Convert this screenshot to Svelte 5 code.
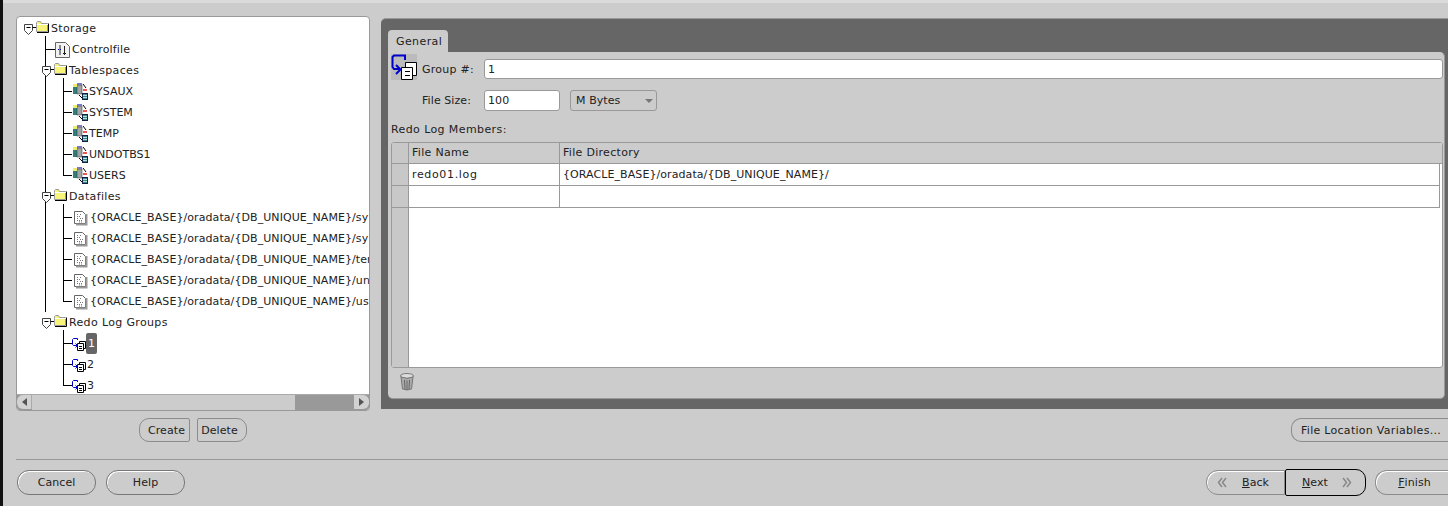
<script>
  const tablespaces = ['SYSAUX', 'SYSTEM', 'TEMP', 'UNDOTBS1', 'USERS'];
  const datafiles = ['sy', 'sy', 'ter', 'un', 'us'];
  const groups = ['1', '2', '3'];
</script>

{#snippet toggle()}
  <svg class="toggle" width="13" height="14" viewBox="0 0 13 14"><path d="M1.500 2.500h8v6l-4 4-4-4z" fill="#fff" stroke="#444"/><path d="M3.500 5.500h4" stroke="#000"/><path d="M9.500 5.500H13" stroke="#000"/></svg>
{/snippet}

{#snippet folder()}
  <svg class="folder" width="13" height="12" viewBox="0 0 13 12"><path d="M.5 3.500V1.500l1-1h3l1 2h6v8H.5z" fill="#f8f47a" stroke="#999"/><path d="M1 3.500h11" stroke="#fff"/><path d="M12.500 2.500v9H1" stroke="#000" fill="none"/></svg>
{/snippet}

<div class="page">
  <div class="top">
    <div class="left">
      <div class="tree-box">
        <div class="tree">
          <div class="row">
            {@render toggle()}
            {@render folder()}
            <span class="label">Storage</span>
          </div>
          <div class="kids root-kids">
            <div class="row leaf">
              <span class="hook"></span>
              <svg class="ctl" width="15" height="16" viewBox="0 0 15 16"><path d="M.5 .5h10l4 4v11H.5z" fill="#f2f2f2" stroke="#666"/><path d="M5 3v10M9.500 4v9" stroke="#222"/><path d="M3 7.500h4M8 11.500h4" stroke="#00a" stroke-dasharray="1 1"/></svg>
              <span class="ctl-text">Controlfile</span>
            </div>
            <div class="row">
              {@render toggle()}
              {@render folder()}
              <span class="label">Tablespaces</span>
            </div>
            <div class="kids">
              {#each tablespaces as name}
                <div class="row leaf">
                  <span class="hook short"></span>
                  <svg width="17" height="17" viewBox="0 0 17 17"><rect x="1" y="3" width="4" height="8" fill="#2f7f7f"/><rect x="5" y="2" width="5" height="9" fill="#a4a4a4" stroke="#333" stroke-width=".5"/><path d="M1 1h4v3H1z" fill="#ee6"/><path d="M5 0h5v2H5z" fill="#77c"/><path d="M11 6h4v2h-4z" fill="#e55"/><rect x="10.500" y="10.500" width="5" height="6" fill="#3a8a8a" stroke="#124"/><path d="M11 12.500h4M11 14.500h4" stroke="#bdd"/><path d="M7 12l3 3M11 1l3 4" stroke="#000" fill="none"/></svg>
                  <span class="sub-text">{name}</span>
                </div>
              {/each}
            </div>
            <div class="row">
              {@render toggle()}
              {@render folder()}
              <span class="label">Datafiles</span>
            </div>
            <div class="kids">
              {#each datafiles as tail}
                <div class="row leaf">
                  <span class="hook short"></span>
                  <svg class="doc" width="15" height="16" viewBox="0 0 15 16"><path d="M1.500 1.500h8l3 3v9h-11z" fill="#fff" stroke="#666"/><path d="M13.500 4v10.500H3" stroke="#999" stroke-width="2" fill="none"/><path d="M4 4.500h2M7 4.500h2M4 6.500h4M4 8.500h2M7 8.500h3M4 10.500h5M6 12h3" stroke="#777" stroke-dasharray="1 1"/></svg>
                  <span class="clip">{'{ORACLE_BASE}/oradata/{DB_UNIQUE_NAME}/' + tail}</span>
                </div>
              {/each}
            </div>
            <div class="row">
              {@render toggle()}
              {@render folder()}
              <span class="label">Redo Log Groups</span>
            </div>
            <div class="kids">
              {#each groups as g}
                <div class="row leaf">
                  <span class="hook short"></span>
                  <svg width="14" height="16" viewBox="0 0 14 16"><path d="M5.500 4V2.500h-4l-1 1v5l1 1H5" fill="none" stroke="#00c"/><path d="M3.500 7.500l2 2-2 2" fill="none" stroke="#00c"/><path d="M7.500 5.500h6v7h-6z" fill="#fff" stroke="#000"/><path d="M5.500 7.500h6v7h-6z" fill="#fff" stroke="#000"/><path d="M7 10.500h3M7 12.500h3" stroke="#000"/></svg>
                  <span class="num" class:selected={g === '1'}>{g}</span>
                </div>
              {/each}
            </div>
          </div>
        </div>
        <div class="hscroll">
          <button class="arrow start" aria-label="left"><span class="tri-l"></span></button>
          <div class="track"><div class="thumb"></div></div>
          <button class="arrow end" aria-label="right"><span class="tri-r"></span></button>
        </div>
      </div>
      <div class="tree-actions">
        <button class="btn pill-l">Create</button>
        <button class="btn pill-r">Delete</button>
      </div>
    </div>

    <div class="right">
      <div class="tab-panel">
        <div class="tab">General</div>
        <div class="tab-body">
          <div class="form-row first">
            <svg class="group-icon" width="26" height="26" viewBox="0 0 26 26"><rect width="26" height="26" fill="#bbb"/><path d="M14 6V1.500H3L1.500 3v10L3 15h5" fill="none" stroke="#00c" stroke-width="2"/><path d="M5 11l4.500 4.500L5 20" fill="none" stroke="#00c" stroke-width="2"/><path d="M14.500 8.500h11v13h-11z" fill="#fff" stroke="#000"/><path d="M10.500 13.500h11v12h-11z" fill="#fff" stroke="#000"/><path d="M14 17.500h5M14 21.500h5" stroke="#000"/></svg>
            <label class="lbl-group" for="group">Group #:</label>
            <input id="group" class="field wide" value="1" />
          </div>
          <div class="form-row second">
            <label class="lbl-size" for="size">File Size:</label>
            <input id="size" class="field small" value="100" />
            <div class="combo">M Bytes<span class="combo-tri"></span></div>
          </div>
          <div class="members">Redo Log Members:</div>
          <div class="table">
            <div class="gutter">
              <div class="g-head"></div>
              <div class="g-cell"></div>
              <div class="g-cell"></div>
            </div>
            <div class="grid-area">
              <div class="t-row head">
                <div class="c1">File Name</div>
                <div class="c2">File Directory</div>
              </div>
              <div class="t-row">
                <div class="c1 name">redo01.log</div>
                <div class="c2">{'{ORACLE_BASE}/oradata/{DB_UNIQUE_NAME}/'}</div>
              </div>
              <div class="t-row">
                <div class="c1"></div>
                <div class="c2"></div>
              </div>
            </div>
          </div>
          <svg class="trash" width="14" height="18" viewBox="0 0 14 18"><ellipse cx="7" cy="3" rx="6.500" ry="2.500" fill="#ddd" stroke="#777"/><path d="M1 4l1.500 12q4.500 2 9 0L13 4q-6 2.500-12 0z" fill="#aaa" stroke="#777"/><path d="M4.500 7l.5 9M7 7.500V17M9.500 7L9 16" stroke="#666"/></svg>
        </div>
      </div>
      <div class="loc-row">
        <button class="btn pill">File Location Variables...</button>
      </div>
    </div>
  </div>

  <div class="footer">
    <div class="foot-left">
      <button class="btn foot">Cancel</button>
      <button class="btn foot">Help</button>
    </div>
    <div class="foot-right">
      <div class="nav">
        <button class="btn back">
          <svg width="10" height="11" viewBox="0 0 10 11"><path d="M5 1L1.500 5.500 5 10M9 1L5.500 5.500 9 10" fill="none" stroke="#888" stroke-width="1.500"/></svg>
          <span><u>B</u>ack</span>
        </button>
        <button class="btn next">
          <span><u>N</u>ext</span>
          <svg width="10" height="11" viewBox="0 0 10 11"><path d="M1 1l3.500 4.500L1 10M5 1l3.500 4.500L5 10" fill="none" stroke="#888" stroke-width="1.500"/></svg>
        </button>
      </div>
      <button class="btn finish"><u>F</u>inish</button>
    </div>
  </div>
</div>

<style>
  :global(body) {
    margin: 0;
    background: #cccccc;
  }

  .page {
    box-sizing: border-box;
    width: 1448px;
    height: 506px;
    overflow: hidden;
    background: #cccccc;
    border-left: 3px solid #111;
    font-family: "DejaVu Sans", sans-serif;
    font-size: 11px;
    letter-spacing: 0.08px;
    color: #222;
    padding-top: 3px;
    background-image: linear-gradient(#dadada, #dadada);
    background-size: 100% 3px;
    background-repeat: no-repeat;
  }

  .top {
    box-sizing: border-box;
    height: 456px;
    display: flex;
    padding: 13px 0 0 13px;
    gap: 11px;
  }

  .left {
    width: 354px;
    flex: none;
  }

  .tree-box {
    box-sizing: border-box;
    height: 395px;
    border: 1px solid #999;
    border-radius: 4px;
    background: #fff;
    overflow: hidden;
    display: flex;
    flex-direction: column;
  }

  .tree {
    flex: 1;
    overflow: hidden;
    padding: 1px 0 0 6px;
  }

  .row {
    height: 21px;
    display: flex;
    align-items: center;
    white-space: nowrap;
    line-height: 21px;
    position: relative;
  }

  .toggle {
    flex: none;
  }

  .folder {
    flex: none;
    margin-top: -3px;
  }

  .label {
    margin-left: 2px;
    letter-spacing: 0.35px;
  }

  .kids {
    margin-left: 18px;
    position: relative;
  }

  .kids::before {
    content: "";
    position: absolute;
    left: 4px;
    top: -3px;
    bottom: 10px;
    width: 1px;
    background: #000;
  }

  .root-kids::before {
    bottom: 84px;
  }

  .leaf {
    padding-left: 4px;
  }

  .hook {
    display: inline-block;
    width: 10px;
    height: 1px;
    background: #000;
    flex: none;
  }

  .hook.short {
    width: 9px;
  }

  .ctl-text {
    margin-left: 2px;
    letter-spacing: 0.15px;
  }

  .sub-text {
    letter-spacing: 0;
  }

  .doc {
    margin-left: 1px;
    margin-right: 2px;
    flex: none;
  }

  .clip {
    flex: none;
  }

  .num {
    margin-left: 1px;
  }

  .selected {
    background: #666;
    color: #fff;
    border-radius: 2px;
    padding: 0 2px;
    margin-left: 0;
    height: 21px;
  }

  .hscroll {
    height: 15px;
    display: flex;
    background: #999;
    border-top: 1px solid #aaa;
    flex: none;
  }

  .arrow {
    width: 15px;
    height: 14px;
    padding: 0;
    border: none;
    background: #d2d2d2;
    display: flex;
    align-items: center;
    justify-content: center;
  }

  .arrow.start {
    border-radius: 6px 0 0 6px;
    border-right: 1px solid #aaa;
  }

  .arrow.end {
    border-radius: 0 6px 6px 0;
  }

  .tri-l {
    border: 4px solid transparent;
    border-left: 0;
    border-right: 5px solid #555;
  }

  .tri-r {
    border: 4px solid transparent;
    border-right: 0;
    border-left: 5px solid #555;
  }

  .track {
    flex: 1;
    background: #999;
  }

  .thumb {
    width: 263px;
    height: 100%;
    background: #ccc;
  }

  .tree-actions {
    display: flex;
    gap: 7px;
    margin-top: 7px;
    padding-left: 123px;
  }

  .btn {
    box-sizing: border-box;
    font: inherit;
    letter-spacing: inherit;
    color: #222;
    background: #cccccc;
    border: 1px solid #8c8c8c;
    padding: 0;
    height: 24px;
    display: inline-flex;
    align-items: center;
    justify-content: center;
  }

  .pill-l {
    width: 51px;
    padding-left: 4px;
    border-radius: 10px 2px 2px 10px;
  }

  .pill-r {
    width: 50px;
    padding-right: 5px;
    border-radius: 2px 10px 10px 2px;
  }

  .right {
    flex: 1;
    min-width: 0;
    padding-top: 2px;
  }

  .tab-panel {
    box-sizing: border-box;
    height: 391px;
    background: #666;
    border-top: 1px solid #999;
    border-radius: 5px 0 0 0;
    padding: 11px 3px 10px 7px;
    display: flex;
    flex-direction: column;
  }

  .tab {
    width: 60px;
    height: 22px;
    flex: none;
    box-sizing: border-box;
    background: #ccc;
    border-radius: 4px 4px 0 0;
    padding-left: 8px;
    line-height: 23px;
    letter-spacing: 0.4px;
  }

  .tab-body {
    flex: 1;
    box-sizing: border-box;
    background: #ccc;
    border-radius: 0 5px 5px 5px;
    border-right: 1px solid #999;
    border-bottom: 1px solid #999;
    padding: 2px 0 0 3px;
  }

  .form-row {
    display: flex;
    align-items: center;
  }

  .form-row.first {
    height: 26px;
  }

  .group-icon {
    flex: none;
  }

  .lbl-group {
    width: 67px;
    padding-left: 5px;
    margin-top: 4px;
    box-sizing: border-box;
    letter-spacing: 0.25px;
  }

  .field {
    box-sizing: border-box;
    font: inherit;
    letter-spacing: inherit;
    color: #222;
    background: #fff;
    border: 1px solid #999;
    border-radius: 3px;
    height: 20px;
    padding: 0 3px;
    outline: none;
  }

  .wide {
    width: 959px;
    margin-top: 4px;
  }

  .second {
    height: 21px;
    margin-top: 10px;
  }

  .lbl-size {
    width: 93px;
    padding-left: 31px;
    box-sizing: border-box;
  }

  .small {
    width: 76px;
    height: 21px;
  }

  .combo {
    box-sizing: border-box;
    width: 87px;
    height: 21px;
    margin-left: 10px;
    border: 1px solid #999;
    border-radius: 3px;
    display: flex;
    align-items: center;
    padding-left: 5px;
    position: relative;
  }

  .combo-tri {
    position: absolute;
    right: 3px;
    top: 8px;
    border: 4px solid transparent;
    border-bottom: 0;
    border-top: 4px solid #777;
  }

  .members {
    margin-top: 11px;
    height: 20px;
    line-height: 15px;
    letter-spacing: 0.4px;
  }

  .table {
    box-sizing: border-box;
    height: 226px;
    width: 1052px;
    border: 1px solid #999;
    border-radius: 3px;
    display: flex;
    background: #fff;
    overflow: hidden;
  }

  .gutter {
    width: 17px;
    box-sizing: border-box;
    flex: none;
    background: #c8c8c8;
    border-right: 1px solid #999;
  }

  .g-head {
    height: 21px;
    box-sizing: border-box;
    border-bottom: 1px solid #999;
  }

  .g-cell {
    height: 22px;
    box-sizing: border-box;
    border-bottom: 1px solid #999;
  }

  .grid-area {
    flex: 1;
  }

  .t-row {
    display: flex;
    width: 1031px;
    height: 22px;
    box-sizing: border-box;
    border-bottom: 1px solid #999;
    line-height: 21px;
    background: #fff;
  }

  .t-row.head {
    width: auto;
    height: 21px;
    line-height: 20px;
    background: #ccc;
    letter-spacing: 0.3px;
  }

  .c1 {
    box-sizing: border-box;
    width: 151px;
    padding-left: 3px;
    border-right: 1px solid #999;
  }

  .c2 {
    flex: 1;
    padding-left: 3px;
    border-right: 1px solid #999;
  }

  .c1.name {
    letter-spacing: 0.65px;
  }

  .head .c2 {
    border-right: none;
  }

  .trash {
    display: block;
    margin: 5px 0 0 9px;
  }

  .loc-row {
    display: flex;
    justify-content: flex-end;
    margin-top: 9px;
  }

  .pill {
    width: 157px;
    padding-left: 2px;
    letter-spacing: 0.28px;
    border-radius: 10px 0 0 10px;
    border-right: none;
  }

  .footer {
    margin-left: 13px;
    border-top: 1px solid #999;
    display: flex;
    justify-content: space-between;
    padding: 10px 0 0 1px;
  }

  .foot-left {
    display: flex;
    gap: 10px;
  }

  .foot {
    width: 79px;
    height: 25px;
    border-radius: 12px;
    border-color: #777;
    box-shadow: inset 1px 1px 0 #fff;
  }

  .foot-right {
    display: flex;
    gap: 9px;
  }

  .nav {
    display: flex;
    align-items: flex-start;
  }

  .back {
    width: 79px;
    height: 25px;
    border-radius: 12px 0 0 12px;
    gap: 15px;
    padding-left: 10px;
    justify-content: flex-start;
    box-shadow: inset 1px 1px 0 #fff;
  }

  .next {
    width: 81px;
    height: 27px;
    margin-top: -1px;
    border: 1px solid #000;
    border-radius: 2px 10px 10px 2px;
    gap: 14px;
    padding-left: 16px;
    justify-content: flex-start;
  }

  .finish {
    width: 73px;
    height: 25px;
    border-radius: 12px 0 0 12px;
    border-right: none;
    padding-left: 5px;
    box-shadow: inset 1px 1px 0 #fff;
  }
</style>
